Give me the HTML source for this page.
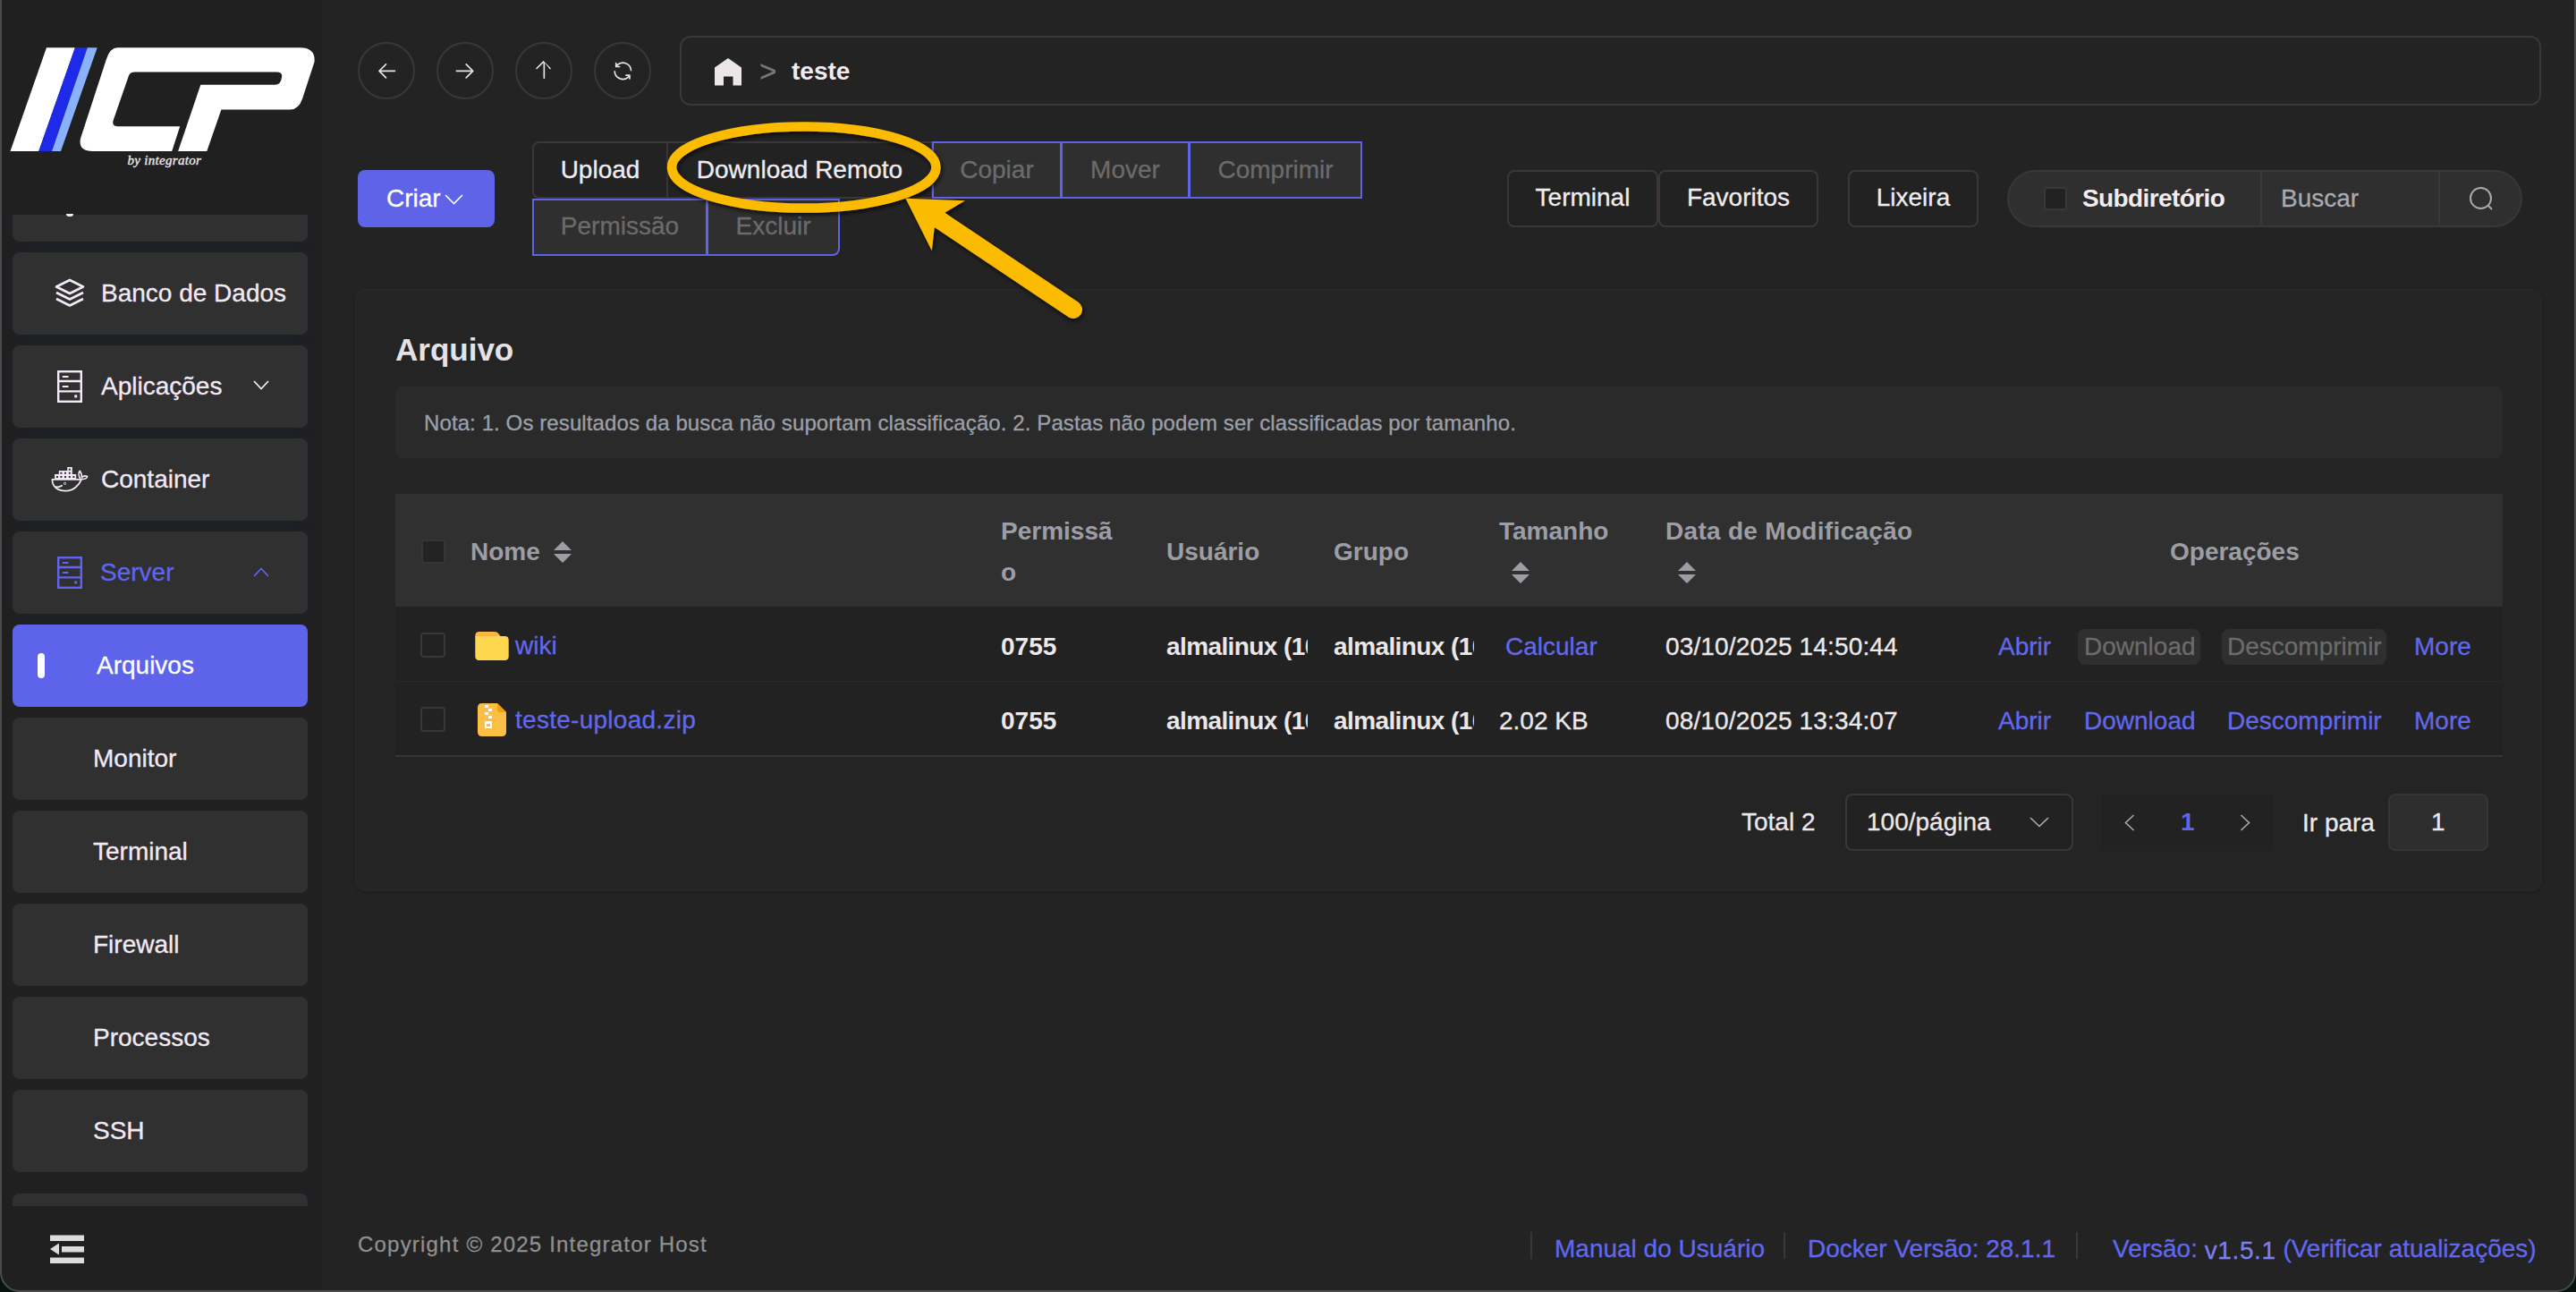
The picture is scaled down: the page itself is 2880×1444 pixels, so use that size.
<!DOCTYPE html>
<html><head><meta charset="utf-8">
<style>
*{box-sizing:border-box;margin:0;padding:0}
html,body{width:2880px;height:1444px;overflow:hidden;background:#07130e;font-family:"Liberation Sans",sans-serif;color:#e8e4e8}
#win div,#win span{-webkit-text-stroke:0.3px currentColor}
#win .th,#win [style*="bold"]{-webkit-text-stroke:0}
.a{position:absolute}
#win{position:absolute;left:0;top:0;width:2880px;height:1444px;background:#232323;overflow:hidden}
#frame{position:absolute;left:0;top:-30px;width:2880px;height:1474px;border:2px solid #4b4b4b;border-radius:22px;box-shadow:0 0 0 60px #07130e;pointer-events:none}
#side{position:absolute;left:0;top:0;width:360px;height:1444px;background:#202020}
.nav{position:absolute;left:14px;width:330px;height:92px;border-radius:8px;background:#303030;font-size:28px;color:#f3e9f5;line-height:92px}
.gl{box-shadow:0 0 8px 2px rgba(20,40,75,0.28)}
.nav .t{position:absolute;left:99px}
.nav .t2{position:absolute;left:90px}
.circ{position:absolute;top:47px;width:64px;height:64px;border-radius:50%;border:2px solid #3c353a}
.btn{position:absolute;height:64px;font-size:28px;line-height:60px;text-align:center}
.dis{background:#2f2f2f;color:#6b6b6b;border:2px solid #5e63e8}
.ob{border:2px solid #3c353a;background:#222;color:#f0ecef;border-radius:8px}
.th{position:absolute;font-size:28px;font-weight:bold;color:#9d9ea5}
.td{position:absolute;font-size:28px;color:#ece8eb}
.lnk{color:#6268ee}
</style></head><body>
<div id="win">
  <div id="side">
    <svg class="a" style="left:0;top:0" width="360" height="200" viewBox="0 0 360 200">
      <polygon points="52,53.3 83.9,53.3 43.3,168.9 11.5,168.9" fill="#ffffff"/>
      <polygon points="83.9,53.3 97.8,53.3 58,168.9 43.3,168.9" fill="#1f2ae8"/>
      <polygon points="97.8,53.3 108.7,53.3 68,168.9 58,168.9" fill="#8ab2fb"/>
      <path fill="#ffffff" d="M131.4,53.3 L335.4,53.3 Q353,53.3 351.5,69.3 L338.2,109.9 Q334,122.5 324.2,122.5 L247.4,122.5 L231.3,168.9 L199.1,168.9 L224.3,94.8 L307.4,94.8 Q314,94.8 315.1,86 Q316,80.5 308.9,80.5 L150.9,80.5 Q145.5,80.5 143.9,84.7 L126.5,135 Q125,141.3 132.1,141.3 L201.2,141.3 L192.2,168.9 L103.4,168.9 Q87,168.9 90.1,154.6 L118.8,66.6 Q123,53.3 131.4,53.3 Z"/>
      <text x="142.5" y="184" font-family="Liberation Serif" font-style="italic" font-size="15" letter-spacing="0.3" fill="#eeeaee" stroke="#eeeaee" stroke-width="0.35">by integrator</text>
    </svg>
    <div class="a" style="left:0;top:240px;width:360px;height:1108px;overflow:hidden">
      <div class="nav gl" style="top:-62px"></div>
      <div class="nav gl" style="top:42px">
        <svg class="a" style="left:47px;top:29px" width="34" height="34" viewBox="0 0 34 34" fill="none" stroke="#f3e9f7" stroke-width="2.6" stroke-linejoin="round"><path d="M17,2 L32,9.5 L17,17 L2,9.5 Z"/><path d="M2,16 L17,23.5 L32,16"/><path d="M2,23 L17,30.5 L32,23"/></svg>
        <span class="t">Banco de Dados</span></div>
      <div class="nav gl" style="top:146px">
        <svg class="a" style="left:50px;top:27.5px" width="28" height="36" viewBox="0 0 28 36" fill="none" stroke="#f3e9f7" stroke-width="2.4"><rect x="1.2" y="1.2" width="25.6" height="33.6"/><path d="M1.2,12 H26.8 M1.2,23.4 H26.8"/><path d="M5.8,7 H12.5 M5.8,18 H12.5" stroke-width="2"/><rect x="19.2" y="27.4" width="3" height="3" fill="#f3e9f7" stroke="none"/></svg>
        <span class="t">Aplicações</span>
        <svg class="a" style="left:269px;top:39px" width="18" height="11" viewBox="0 0 18 11" fill="none" stroke="#f3e9f7" stroke-width="1.8"><path d="M1,1 L9,9.5 L17,1"/></svg></div>
      <div class="nav gl" style="top:250px">
        <svg class="a" style="left:40px;top:26px" width="50" height="38" viewBox="0 0 50 38"><path fill="#f3e9f7" fill-rule="evenodd" d="M7.1,14.1 H11.8 V10 H21.2 V6 H26.8 V14.1 H31.2 V19 H7.1 Z M9,15.9 h2v2h-2z M13.4,15.9 h2v2h-2z M18,15.9 h2v2h-2z M22.8,15.9 h2v2h-2z M27.4,15.9 h2v2h-2z M13.4,11.8 h2v2h-2z M18,11.8 h2v2h-2z M22.8,11.8 h2v2h-2z M22.8,7.8 h2v2h-2z"/><g fill="none" stroke="#f3e9f7" stroke-width="1.7" stroke-linecap="round" stroke-linejoin="round"><path d="M4.4,19.8 H36.2 M4.4,19.8 C4.4,28.5 11,32.6 19.5,32.6 C28.5,32.6 34.5,26 37.2,19.6 C40.5,19.5 43.2,18.2 43.6,16.6 C41.5,15.6 39,16 37.6,17.6 C37.4,14.5 36.5,11.8 35.3,10.4 C33.8,12 33.5,15.5 35.6,18.6"/><path d="M15.2,26.8 C13,28.4 10.5,28.6 8.6,28.2"/></g><circle cx="18.5" cy="24.4" r="1.1" fill="none" stroke="#f3e9f7" stroke-width="1"/></svg>
        <span class="t">Container</span></div>
      <div class="nav gl" style="top:354px;color:#5f65ee">
        <svg class="a" style="left:50px;top:27.5px" width="28" height="36" viewBox="0 0 28 36" fill="none" stroke="#5f65ee" stroke-width="2.4"><rect x="1.2" y="1.2" width="25.6" height="33.6"/><path d="M1.2,12 H26.8 M1.2,23.4 H26.8"/><path d="M5.8,7 H12.5 M5.8,18 H12.5" stroke-width="2"/><rect x="19.2" y="27.4" width="3" height="3" fill="#5f65ee" stroke="none"/></svg>
        <span class="t" style="left:98px">Server</span>
        <svg class="a" style="left:269px;top:40px" width="18" height="11" viewBox="0 0 18 11" fill="none" stroke="#5f65ee" stroke-width="1.8"><path d="M1,10 L9,1.5 L17,10"/></svg></div>
      <div class="nav" style="top:458px;background:#5e63ec;color:#ffffff">
        <div class="a" style="left:28px;top:32px;width:8px;height:28px;border-radius:4px;background:#fff"></div>
        <span class="a" style="left:94px">Arquivos</span></div>
      <div class="nav" style="top:562px"><span class="t2">Monitor</span></div>
      <div class="nav" style="top:666px"><span class="t2">Terminal</span></div>
      <div class="nav" style="top:770px"><span class="t2">Firewall</span></div>
      <div class="nav" style="top:874px"><span class="t2">Processos</span></div>
      <div class="nav" style="top:978px"><span class="t2">SSH</span></div>
      <div class="nav gl" style="top:1094px"><span class="t2">Logs</span></div>
    </div>
    <div class="a" style="left:74px;top:239px;width:8px;height:2.5px;border-radius:0 0 4px 4px;background:#f3e9f7"></div>
    <svg class="a" style="left:56px;top:1380px" width="38" height="32" viewBox="0 0 38 32" fill="#dcdcdc"><rect x="0" y="0.5" width="38" height="6.5"/><rect x="13" y="13" width="25" height="6.5"/><rect x="0" y="25.5" width="38" height="6.5"/><polygon points="0,16 10,9.5 10,22.5"/></svg>
  </div>
  <div id="main">
    <div class="circ" style="left:400px"><svg class="a" style="left:17px;top:17px" width="26.7" height="26.7" viewBox="0 0 1024 1024" fill="#e8e4e8"><path d="M224 480h640a32 32 0 1 1 0 64H224a32 32 0 0 1 0-64z"/><path d="m237.248 512 265.408 265.344a32 32 0 0 1-45.312 45.312l-288-288a32 32 0 0 1 0-45.312l288-288a32 32 0 1 1 45.312 45.312L237.248 512z"/></svg></div>
    <div class="circ" style="left:488px"><svg class="a" style="left:17px;top:17px" width="26.7" height="26.7" viewBox="0 0 1024 1024" fill="#e8e4e8"><path d="M128 480h640a32 32 0 1 1 0 64H128a32 32 0 0 1 0-64z"/><path d="m786.752 512-265.408 265.344a32 32 0 0 0 45.312 45.312l288-288a32 32 0 0 0 0-45.312l-288-288a32 32 0 1 0-45.312 45.312L786.752 512z"/></svg></div>
    <div class="circ" style="left:576px"><svg class="a" style="left:17px;top:15px" width="26.7" height="26.7" viewBox="0 0 1024 1024" fill="#e8e4e8"><path d="M480 896V237.248L214.656 502.656a32 32 0 0 1-45.312-45.312l288-288a32 32 0 0 1 45.312 0l288 288a32 32 0 0 1-45.312 45.312L544 237.248V896a32 32 0 0 1-64 0z"/></svg></div>
    <div class="circ" style="left:664px"><svg class="a" style="left:17px;top:17px" width="26.7" height="26.7" viewBox="0 0 1024 1024" fill="#e8e4e8"><path d="M771.776 794.88A384 384 0 0 1 128 512h64a320 320 0 0 0 555.712 216.448H654.72a32 32 0 1 1 0-64h149.056a32 32 0 0 1 32 32v148.928a32 32 0 1 1-64 0v-50.56zM276.288 295.616h92.992a32 32 0 0 1 0 64H220.16a32 32 0 0 1-32-32V178.56a32 32 0 0 1 64 0v50.56A384 384 0 0 1 896.128 512h-64a320 320 0 0 0-555.776-216.384z"/></svg></div>
    <div class="a" style="left:760px;top:40px;width:2081px;height:78px;border:2px solid #3c353a;border-radius:12px"></div>
    <svg class="a" style="left:799px;top:65px" width="30" height="31" viewBox="0 0 30 31" fill="#ece6e8"><path d="M15,0 L30,10.5 V30.5 H20.5 V20.5 H10 V30.5 H0 V10.5 Z"/></svg>
    <div class="a" style="left:849px;top:60px;font-size:33px;color:#7a767a;line-height:40px">&gt;</div>
    <div class="a" style="left:885px;top:62px;font-size:28px;color:#f0ecef;font-weight:bold;line-height:36px">teste</div>

    <div class="a" style="left:400px;top:190px;width:153px;height:64px;border-radius:8px;background:#5e63e8;color:#fff;font-size:28px;line-height:64px;padding-left:32px">Criar<svg class="a" style="left:96.5px;top:26.5px" width="21" height="12" viewBox="0 0 21 12" fill="none" stroke="#fff" stroke-width="1.6"><path d="M1,1 L10.5,10.5 L20,1"/></svg></div>

    <div class="btn ob" style="left:595px;top:158px;width:152px;border-radius:8px 0 0 8px">Upload</div>
    <div class="btn ob" style="left:745px;top:158px;width:298px;border-radius:0">Download Remoto</div>
    <div class="btn dis" style="left:1042px;top:158px;width:145px">Copiar</div>
    <div class="btn dis" style="left:1186px;top:158px;width:144px">Mover</div>
    <div class="btn dis" style="left:1329px;top:158px;width:194px">Comprimir</div>
    <div class="btn dis" style="left:595px;top:222px;width:196px;height:64px;line-height:58px">Permissão</div>
    <div class="btn dis" style="left:790px;top:222px;width:149px;height:64px;line-height:58px;border-radius:0 0 8px 0">Excluir</div>

    <div class="btn ob" style="left:1685px;top:190px;width:169px;height:64px;line-height:58px">Terminal</div>
    <div class="btn ob" style="left:1854px;top:190px;width:179px;height:64px;line-height:58px">Favoritos</div>
    <div class="btn ob" style="left:2066px;top:190px;width:146px;height:64px;line-height:58px">Lixeira</div>

    <div class="a" style="left:2244px;top:190px;width:576px;height:64px;border-radius:32px;background:#2f2f2f;border:2px solid #3c353a"></div>
    <div class="a" style="left:2285px;top:209px;width:26px;height:26px;border-radius:3px;background:#222;border:2px solid #3c353a"></div>
    <div class="a" style="left:2328px;top:200px;font-size:28px;font-weight:bold;color:#f0ecef;line-height:44px;letter-spacing:-0.6px">Subdiretório</div>
    <div class="a" style="left:2527px;top:192px;width:2px;height:60px;background:#3c353a"></div>
    <div class="a" style="left:2550px;top:200px;font-size:28px;color:#a9aab2;line-height:44px">Buscar</div>
    <div class="a" style="left:2726px;top:192px;width:2px;height:60px;background:#3c353a"></div>
    <svg class="a" style="left:2760px;top:208px" width="30" height="30" viewBox="0 0 30 30" fill="none" stroke="#a9aab2" stroke-width="2"><circle cx="13.5" cy="13.5" r="11.5"/><path d="M21.8,21.8 L26,26"/></svg>

    <div class="a" style="left:397px;top:323px;width:2445px;height:673px;background:#242424;border-radius:12px;border:2px solid #2a252a;box-shadow:0 2px 4px rgba(0,0,0,0.15)"></div>
    <div class="a" style="left:442px;top:368.5px;font-size:35px;font-weight:bold;color:#e4e2e4;line-height:44px">Arquivo</div>
    <div class="a" style="left:442px;top:431.5px;width:2356px;height:80.5px;background:#2a2a2a;border-radius:8px"></div>
    <div class="a" style="left:474px;top:456.5px;font-size:24px;color:#9ca0a9;line-height:32px;letter-spacing:0.1px">Nota: 1. Os resultados da busca não suportam classificação. 2. Pastas não podem ser classificadas por tamanho.</div>

    <div class="a" style="left:442px;top:552px;width:2356px;height:126px;background:#303030"></div>
    <div class="a" style="left:442px;top:678px;width:2356px;height:168px;background:#222222"></div>
    <div class="a" style="left:442px;top:761px;width:2356px;height:1px;background:#2a2a2a"></div>
    <div class="a" style="left:442px;top:844px;width:2356px;height:2px;background:#363636"></div>

    <div class="a" style="left:470.5px;top:602.5px;width:27px;height:27px;border-radius:4px;background:#232323;border:2px solid #3a3238"></div>
    <div class="th" style="left:526px;top:594.7px;line-height:44px">Nome</div>
    <svg class="a" style="left:619px;top:605px" width="20" height="24" viewBox="0 0 20 24" fill="#9d9ea5"><path d="M10,0 L20,10 H0 Z M0,14 H20 L10,24 Z"/></svg>
    <div class="th" style="left:1119px;top:571px;line-height:46px">Permissã<br>o</div>
    <div class="th" style="left:1304px;top:594.7px;line-height:44px">Usuário</div>
    <div class="th" style="left:1491px;top:594.7px;line-height:44px">Grupo</div>
    <div class="th" style="left:1676px;top:571px;line-height:46px">Tamanho</div>
    <svg class="a" style="left:1690px;top:628px" width="20" height="24" viewBox="0 0 20 24" fill="#9d9ea5"><path d="M10,0 L20,10 H0 Z M0,14 H20 L10,24 Z"/></svg>
    <div class="th" style="left:1862px;top:571px;line-height:46px;letter-spacing:0.3px">Data de Modificação</div>
    <svg class="a" style="left:1876px;top:628px" width="20" height="24" viewBox="0 0 20 24" fill="#9d9ea5"><path d="M10,0 L20,10 H0 Z M0,14 H20 L10,24 Z"/></svg>
    <div class="th" style="left:2426px;top:594.7px;line-height:44px">Operações</div>

    <div class="a" style="left:470px;top:707px;width:28px;height:28px;border-radius:4px;border:2px solid #3c353a"></div>
    <svg class="a" style="left:531px;top:705.8px" width="38" height="32" viewBox="0 0 37.4 32"><path d="M0,4.5 Q0,0 4.5,0 H21.5 Q24.5,0 26,2 L28.5,5.5 H0 Z" fill="#fbb540"/><path d="M0,5 H33 Q37.4,5 37.4,9.4 V27.6 Q37.4,32 33,32 H4.4 Q0,32 0,27.6 Z" fill="#fed64f"/></svg>
    <div class="td lnk" style="left:576px;top:700px;line-height:44px">wiki</div>
    <div class="td" style="left:1119px;top:701px;line-height:44px;font-weight:bold">0755</div>
    <div class="td" style="left:1304px;top:701px;line-height:44px;font-weight:bold;width:158px;overflow:hidden;white-space:nowrap;letter-spacing:-0.6px;color:#ebe6e7">almalinux (1000)</div>
    <div class="td" style="left:1491px;top:701px;line-height:44px;font-weight:bold;width:157px;overflow:hidden;white-space:nowrap;letter-spacing:-0.6px;color:#ebe6e7">almalinux (1000)</div>
    <div class="td lnk" style="left:1683px;top:701px;line-height:44px">Calcular</div>
    <div class="td" style="left:1862px;top:701px;line-height:44px;letter-spacing:0.15px">03/10/2025 14:50:44</div>
    <div class="td lnk" style="left:2234px;top:701px;line-height:44px">Abrir</div>
    <div class="a" style="left:2323px;top:703px;width:137px;height:40px;border-radius:8px;background:#2f2f2f"></div>
    <div class="td" style="left:2330px;top:701px;line-height:44px;color:#6b6b6b">Download</div>
    <div class="a" style="left:2484px;top:703px;width:184px;height:40px;border-radius:8px;background:#2f2f2f"></div>
    <div class="td" style="left:2490px;top:701px;line-height:44px;color:#6b6b6b">Descomprimir</div>
    <div class="td lnk" style="left:2699px;top:701px;line-height:44px">More</div>

    <div class="a" style="left:470px;top:790px;width:28px;height:28px;border-radius:4px;border:2px solid #3c353a"></div>
    <svg class="a" style="left:534px;top:786px" width="32" height="37" viewBox="0 0 32 37"><path d="M5,0 H22 L32,10 V32 Q32,37 27,37 H5 Q0,37 0,32 V5 Q0,0 5,0 Z" fill="#fbbf45"/><path d="M22,0 L32,10 H25 Q22,10 22,7 Z" fill="#f59e0b"/><path d="M8,2 h4 v3 h-4z M12,6 h4 v3 h-4z M8,10 h4 v3 h-4z M12,14 h4 v3 h-4z" fill="#fff"/><rect x="8" y="20" width="8" height="8" rx="1" fill="#fff"/><rect x="10" y="23" width="4" height="3" fill="#fbbf45"/></svg>
    <div class="td lnk" style="left:576px;top:783px;line-height:44px;letter-spacing:0.27px">teste-upload.zip</div>
    <div class="td" style="left:1119px;top:784px;line-height:44px;font-weight:bold">0755</div>
    <div class="td" style="left:1304px;top:784px;line-height:44px;font-weight:bold;width:158px;overflow:hidden;white-space:nowrap;letter-spacing:-0.6px;color:#ebe6e7">almalinux (1000)</div>
    <div class="td" style="left:1491px;top:784px;line-height:44px;font-weight:bold;width:157px;overflow:hidden;white-space:nowrap;letter-spacing:-0.6px;color:#ebe6e7">almalinux (1000)</div>
    <div class="td" style="left:1676px;top:784px;line-height:44px">2.02 KB</div>
    <div class="td" style="left:1862px;top:784px;line-height:44px;letter-spacing:0.15px">08/10/2025 13:34:07</div>
    <div class="td lnk" style="left:2234px;top:784px;line-height:44px">Abrir</div>
    <div class="td lnk" style="left:2330px;top:784px;line-height:44px">Download</div>
    <div class="td lnk" style="left:2490px;top:784px;line-height:44px">Descomprimir</div>
    <div class="td lnk" style="left:2699px;top:784px;line-height:44px">More</div>

    <div class="td" style="left:1947px;top:897px;line-height:44px">Total 2</div>
    <div class="a" style="left:2063px;top:887px;width:255px;height:64px;border:2px solid #3c353a;border-radius:8px;background:#222"></div>
    <div class="td" style="left:2087px;top:897px;line-height:44px">100/página</div>
    <svg class="a" style="left:2269px;top:913px" width="22" height="12" viewBox="0 0 22 12" fill="none" stroke="#a9aab2" stroke-width="1.6"><path d="M1,1 L11,10.5 L21,1"/></svg>
    <div class="a" style="left:2350px;top:887px;width:192px;height:64px;background:#222;border-radius:4px"></div>
    <svg class="a" style="left:2375px;top:910px" width="12" height="19" viewBox="0 0 12 19" fill="none" stroke="#a9aab2" stroke-width="1.6"><path d="M10.5,1 L1.5,9.5 L10.5,18"/></svg>
    <div class="td" style="left:2438px;top:897px;line-height:44px;color:#5f65ee;font-weight:bold">1</div>
    <svg class="a" style="left:2504px;top:910px" width="12" height="19" viewBox="0 0 12 19" fill="none" stroke="#a9aab2" stroke-width="1.6"><path d="M1.5,1 L10.5,9.5 L1.5,18"/></svg>
    <div class="td" style="left:2574px;top:898px;line-height:44px">Ir para</div>
    <div class="a" style="left:2670px;top:887px;width:112px;height:64px;border-radius:8px;background:#2e2e2e;border:2px solid #3a3238"></div>
    <div class="td" style="left:2718px;top:897px;line-height:44px">1</div>

    <div class="a" style="left:400px;top:1373px;font-size:24px;color:#909091;line-height:36px;letter-spacing:1.2px">Copyright © 2025 Integrator Host</div>
    <div class="a" style="left:1711px;top:1377px;width:2px;height:30px;background:#3c353a"></div>
    <div class="a lnk" style="left:1738px;top:1378px;font-size:28px;line-height:36px">Manual do Usuário</div>
    <div class="a" style="left:1994px;top:1377px;width:2px;height:30px;background:#3c353a"></div>
    <div class="a lnk" style="left:2021px;top:1378px;font-size:28px;line-height:36px">Docker Versão: 28.1.1</div>
    <div class="a" style="left:2321px;top:1377px;width:2px;height:30px;background:#3c353a"></div>
    <div class="a lnk" style="left:2362px;top:1378px;font-size:28px;line-height:36px">Versão: <span style="color:#7d80e6;letter-spacing:0.6px;position:relative;top:2px">v1.5.1</span> (Verificar atualizações)</div>

    <svg class="a" style="left:700px;top:100px" width="560" height="300" viewBox="700 100 560 300">
      <defs><filter id="sh" x="-20%" y="-20%" width="140%" height="140%"><feDropShadow dx="1.5" dy="2.5" stdDeviation="2.5" flood-color="#000" flood-opacity="0.75"/></filter></defs>
      <g filter="url(#sh)" fill="#fbbb00">
      <ellipse cx="898.75" cy="187" rx="147.7" ry="45.6" fill="none" stroke="#fbbb00" stroke-width="10.5"/>
      <path d="M1050.7,246 L1200,346" stroke="#fbbb00" stroke-width="20" stroke-linecap="round"/>
      <polygon points="1012.5,221.7 1079,224.3 1056.6,237.5 1051,250 1044.7,254.6 1041.8,280.3"/>
      </g>
    </svg>
  </div>
</div>
<div id="frame"></div>
</body></html>
